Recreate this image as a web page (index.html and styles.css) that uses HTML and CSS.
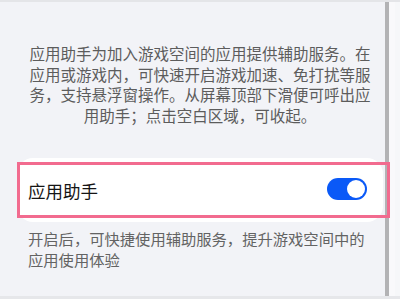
FILE: index.html
```html
<!DOCTYPE html>
<html lang="zh-CN">
<head>
<meta charset="utf-8">
<link rel="stylesheet" href="styles.css">
</head>
<body>
<div class="screen">
  <div class="main">
    <p class="intro">应用助手为加入游戏空间的应用提供辅助服务。在应用或游戏内，可快速开启游戏加速、免打扰等服务，支持悬浮窗操作。从屏幕顶部下滑便可呼出应用助手；点击空白区域，可收起。</p>
    <div class="card">
      <span class="title">应用助手</span>
      <span class="toggle"><span class="knob"></span></span>
      <div class="highlight"></div>
    </div>
    <p class="note">开启后，可快捷使用辅助服务，提升游戏空间中的应用使用体验</p>
  </div>
  <div class="scrollbar"></div>
  <div class="edge"></div>
</div>
</body>
</html>
```
FILE: styles.css
```css
html, body {
  margin: 0;
  padding: 0;
}
body {
  width: 400px;
  height: 299px;
  overflow: hidden;
  background: #f2f3f7;
  font-family: "Noto Sans CJK SC", "Noto Sans", sans-serif;
}
.screen {
  display: flex;
  height: 299px;
  box-sizing: border-box;
  border-top: 2px solid #e4e5e8;
  border-bottom: 3px solid #e6e7ea;
}
.main {
  width: 385px;
  flex: none;
  padding-top: 41px;
  box-sizing: border-box;
}
.intro {
  margin: 0 0 0 29px;
  width: 342px;
  text-align: center;
  font-size: 15.5px;
  line-height: 20.5px;
  color: #5c5c5c;
}
.card {
  position: relative;
  margin: 33px 0 0 17px;
  width: 366px;
  height: 64px;
  box-sizing: border-box;
  background: #ffffff;
  border-radius: 16px;
  display: flex;
  align-items: center;
  justify-content: space-between;
  padding: 0 16px 0 11px;
}
.title {
  font-size: 17.5px;
  font-weight: 400;
  color: #151515;
}
.toggle {
  width: 40px;
  height: 22px;
  border-radius: 11px;
  background: #0a59f7;
  display: flex;
  align-items: center;
  justify-content: flex-end;
  padding: 0 2px;
  box-sizing: border-box;
  margin-top: -2px;
}
.knob {
  width: 18px;
  height: 18px;
  border-radius: 50%;
  background: #ffffff;
}
.highlight {
  position: absolute;
  left: 0;
  top: 4px;
  width: 373px;
  height: 56px;
  box-sizing: border-box;
  border: 3px solid #f26b8f;
}
.note {
  margin: 6px 0 0 28px;
  width: 340px;
  font-size: 15.3px;
  line-height: 21px;
  color: #636363;
}
.scrollbar {
  width: 4px;
  flex: none;
  background: #b3b3b5;
}
.edge {
  flex: 1;
  background: #f6f7f9;
  border-left: 6px solid #f9f9fb;
}
```
